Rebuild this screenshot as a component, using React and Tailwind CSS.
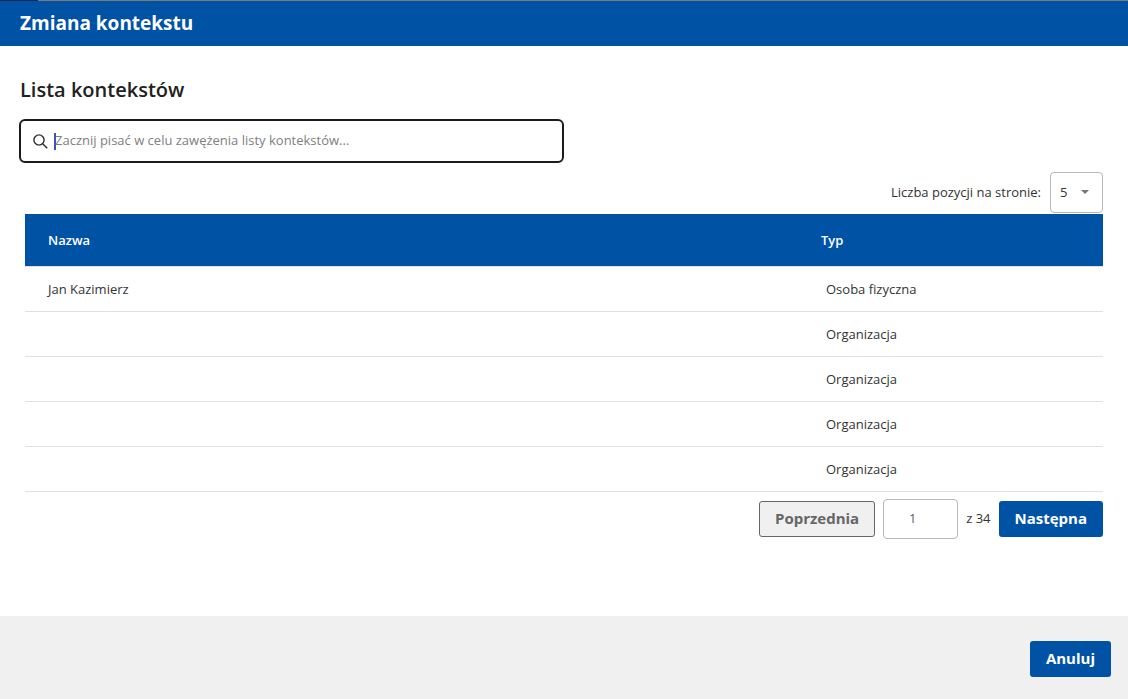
import React, { useState } from 'react';

const CONTEXTS = [
    { id: 1, name: 'Jan Kazimierz', type: 'Osoba fizyczna' },
    { id: 2, name: '', type: 'Organizacja' },
    { id: 3, name: '', type: 'Organizacja' },
    { id: 4, name: '', type: 'Organizacja' },
    { id: 5, name: '', type: 'Organizacja' },
];

const PrimaryButton = ({ children, onClick }) => (
    <button
        type="button"
        onClick={onClick}
        className="h-9 px-4 pb-0.5 rounded-[3px] bg-[#0052a5] text-white text-[15px] leading-5 font-bold"
    >
        {children}
    </button>
);

const SearchBox = ({ value, onChange }) => (
    <div className="flex items-center w-1/2 h-11 px-3 border-2 border-[#1b1b1d] rounded-md">
        <svg className="w-4 h-4 shrink-0 mr-[5px]" viewBox="0 0 16 16" fill="none" stroke="#2b2b2b" strokeWidth="1.4" aria-hidden="true">
            <circle cx="6" cy="7" r="5.1" />
            <path d="M9.7 10.7 L14.2 15.2" />
        </svg>
        {!value && <span className="w-0.5 h-[17px] shrink-0 bg-[#3f51b5]" />}
        <input
            type="text"
            aria-label="Szukaj kontekstu"
            value={value}
            onChange={(e) => onChange(e.target.value)}
            placeholder="Zacznij pisać w celu zawężenia listy kontekstów..."
            className="flex-1 min-w-0 h-full -ml-px pb-0.5 text-[13px] text-[#212121] placeholder:text-[#808080] caret-[#3f51b5] outline-none bg-transparent"
        />
    </div>
);

const ContextTable = ({ rows }) => (
    <table className="w-full table-fixed border-collapse text-[13px] leading-5 text-left">
        <colgroup>
            <col />
            <col className="w-[282px]" />
        </colgroup>
        <thead>
            <tr className="h-13 bg-[#0052a5] text-white">
                <th className="pl-[23px] font-semibold">Nazwa</th>
                <th className="font-semibold">Typ</th>
            </tr>
        </thead>
        <tbody>
            {rows.map((row) => (
                <tr key={row.id} className="h-[45px] border-y border-[#e0e0e0]">
                    <td className="pl-[23px]">{row.name}</td>
                    <td className="pl-[5px]">{row.type}</td>
                </tr>
            ))}
        </tbody>
    </table>
);

const App = () => {
    const [query, setQuery] = useState('');
    const [pageSize, setPageSize] = useState('5');
    const [page, setPage] = useState('1');

    const rows = CONTEXTS.filter((c) => `${c.name} ${c.type}`.toLowerCase().includes(query.toLowerCase()));

    return (
        <div className="min-h-screen flex flex-col bg-white text-[#333333] font-['Open_Sans',sans-serif]">
            <div className="flex h-px bg-[#7a7a7a]">
                <div className="w-[38px] bg-[#0a2a4d]" />
            </div>
            <header className="h-[45px] flex items-center px-5 pb-0.5 bg-[#0052a5]">
                <h1 className="text-[19px] leading-6 font-bold text-white">Zmiana kontekstu</h1>
            </header>

            <main className="flex-1 px-[19px] pt-8">
                <h2 className="mb-[17px] px-px text-xl leading-6 font-semibold text-[#212121]">Lista kontekstów</h2>
                <SearchBox value={query} onChange={setQuery} />

                <div className="px-[6px] pt-[9px]">
                    <div className="flex items-center justify-end gap-[9px] mb-px text-[13px]">
                        <label htmlFor="page-size">Liczba pozycji na stronie:</label>
                        <div className="relative">
                            <select
                                id="page-size"
                                value={pageSize}
                                onChange={(e) => setPageSize(e.target.value)}
                                className="block appearance-none w-[53px] h-[41px] pl-[9px] border border-[#b8b8b8] rounded bg-white"
                            >
                                <option value="5">5</option>
                                <option value="10">10</option>
                                <option value="20">20</option>
                            </select>
                            <svg className="absolute right-[14px] top-[18px] w-2 h-1 pointer-events-none" viewBox="0 0 8 4" fill="#757575" aria-hidden="true">
                                <path d="M0 0h8L4 4z" />
                            </svg>
                        </div>
                    </div>

                    <ContextTable rows={rows} />

                    <div className="flex items-center justify-end gap-2 mt-[7px] text-[13px]">
                        <button
                            type="button"
                            disabled
                            className="h-9 px-[15px] pb-0.5 rounded-[3px] border border-[#666666] bg-[#f0f0f0] text-[#666666] text-[15px] leading-5 font-bold"
                        >
                            Poprzednia
                        </button>
                        <input
                            type="text"
                            aria-label="Numer strony"
                            value={page}
                            onChange={(e) => setPage(e.target.value)}
                            className="w-[75px] h-10 pr-4 border border-[#b8b8b8] rounded text-center text-xs text-[#555555]"
                        />
                        <span>z 34</span>
                        <PrimaryButton onClick={() => setPage(String(Number(page) + 1))}>Następna</PrimaryButton>
                    </div>
                </div>
            </main>

            <footer className="flex justify-end pt-[25px] pb-[22px] px-[17px] bg-[#f0f0f0]">
                <PrimaryButton>Anuluj</PrimaryButton>
            </footer>
        </div>
    );
};

export default App;
